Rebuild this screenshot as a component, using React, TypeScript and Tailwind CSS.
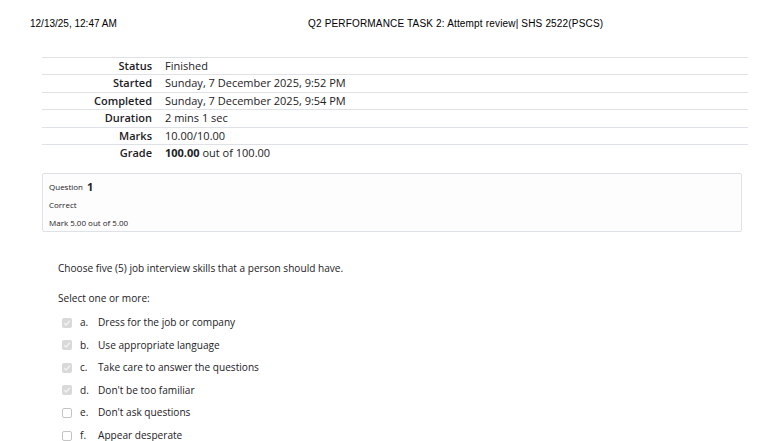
import React from "react";

const rows: { label: string; value: React.ReactNode }[] = [
  { label: "Status", value: "Finished" },
  { label: "Started", value: "Sunday, 7 December 2025, 9:52 PM" },
  { label: "Completed", value: "Sunday, 7 December 2025, 9:54 PM" },
  { label: "Duration", value: "2 mins 1 sec" },
  { label: "Marks", value: "10.00/10.00" },
  {
    label: "Grade",
    value: (
      <>
        <b className="font-bold">100.00</b> out of 100.00
      </>
    ),
  },
];

const options = [
  { l: "a.", t: "Dress for the job or company", c: true },
  { l: "b.", t: "Use appropriate language", c: true },
  { l: "c.", t: "Take care to answer the questions", c: true },
  { l: "d.", t: "Don't be too familiar", c: true },
  { l: "e.", t: "Don't ask questions", c: false },
  { l: "f.", t: "Appear desperate", c: false },
];

function Box({ checked }: { checked: boolean }) {
  if (checked) {
    return (
      <span className="w-[10px] h-[10px] rounded-[2px] bg-[#d9d9d9] flex items-center justify-center">
        <svg width="8" height="8" viewBox="0 0 8 8">
          <path d="M1.2 4.2 L3.2 6 L6.8 1.8" stroke="#f2f2f2" strokeWidth="1.4" fill="none" />
        </svg>
      </span>
    );
  }
  return <span className="block w-[10px] h-[10px] rounded-[2px] border border-[#c4c4c4] bg-white" />;
}

export default function App() {
  return (
    <div className="w-[784px] h-[441px] bg-white overflow-hidden text-[#1d2125]">
      <div className="flex pt-[18px] pl-[30px] text-[10px] leading-[12px] font-['Liberation_Sans',Arial,sans-serif] text-black">
        <span className="w-[278px]">12/13/25, 12:47 AM</span>
        <span className="tracking-[0.17px]">Q2 PERFORMANCE TASK 2: Attempt review| SHS 2522(PSCS)</span>
      </div>

      <div className="ml-[42px] w-[706px] mt-[27px] font-['Open_Sans',sans-serif] text-[11px]">
        {rows.map((r) => (
          <div key={r.label} className="flex items-center h-[17.4px] border-t-[1.5px] border-[#dee2e6]">
            <div className="w-[110px] text-right font-semibold">{r.label}</div>
            <div className="pl-[13px]">{r.value}</div>
          </div>
        ))}
      </div>

      <div className="ml-[42px] w-[700px] mt-[12px] h-[59px] border border-[#dee2e6] rounded-[2px] bg-[#fdfdfd] pl-[6px] pt-[4px] font-['Open_Sans',sans-serif] text-[8px] flex flex-col">
        <div className="h-[18px] flex items-center">
          <span>Question</span>
          <span className="ml-[4px] text-[11px] font-bold">1</span>
        </div>
        <div className="h-[18px] flex items-center">Correct</div>
        <div className="h-[18px] flex items-center">Mark 5.00 out of 5.00</div>
      </div>

      <div className="pl-[58px] font-['Open_Sans',sans-serif] text-[10.1px]">
        <div className="mt-[29px] h-[14px] flex items-center">Choose five (5) job interview skills that a person should have.</div>
        <div className="mt-[16px] h-[14px] flex items-center">Select one or more:</div>
        <div className="mt-[6px] flex flex-col">
          {options.map((o) => (
            <div key={o.l} className="h-[22.6px] flex items-center">
              <span className="ml-[4px]">
                <Box checked={o.c} />
              </span>
              <span className="ml-[8px] w-[18px]">{o.l}</span>
              <span>{o.t}</span>
            </div>
          ))}
        </div>
      </div>
    </div>
  );
}
